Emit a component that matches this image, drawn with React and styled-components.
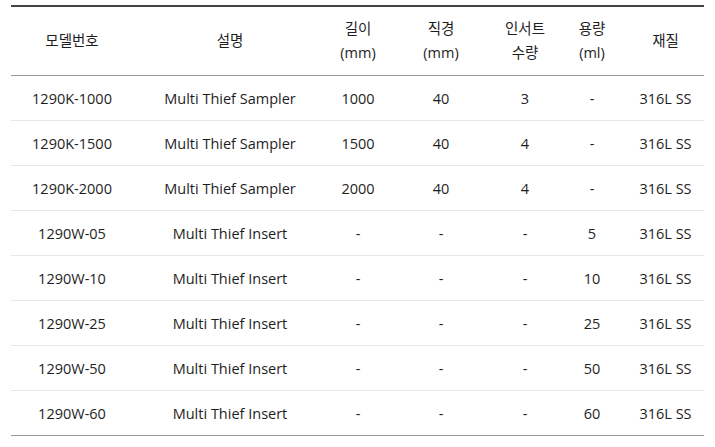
import React from 'react'
import styled, { createGlobalStyle } from 'styled-components';

const GlobalStyle = createGlobalStyle`
  body {
    margin: 0;
    background: #fff;
    font-family: "Open Sans", "Noto Sans CJK KR", sans-serif;
  }
`

const columns = [
  { label: ['모델번호'], width: 122 },
  { label: ['설명'], width: 194 },
  { label: ['길이', '(mm)'], width: 62 },
  { label: ['직경', '(mm)'], width: 104 },
  { label: ['인서트', '수량'], width: 64 },
  { label: ['용량', '(ml)'], width: 70 },
  { label: ['재질'], width: 77 },
];

const rows = [
  ['1290K-1000', 'Multi Thief Sampler', '1000', '40', '3', '-', '316L SS'],
  ['1290K-1500', 'Multi Thief Sampler', '1500', '40', '4', '-', '316L SS'],
  ['1290K-2000', 'Multi Thief Sampler', '2000', '40', '4', '-', '316L SS'],
  ['1290W-05', 'Multi Thief Insert', '-', '-', '-', '5', '316L SS'],
  ['1290W-10', 'Multi Thief Insert', '-', '-', '-', '10', '316L SS'],
  ['1290W-25', 'Multi Thief Insert', '-', '-', '-', '25', '316L SS'],
  ['1290W-50', 'Multi Thief Insert', '-', '-', '-', '50', '316L SS'],
  ['1290W-60', 'Multi Thief Insert', '-', '-', '-', '60', '316L SS'],
];

const App = () => {
  return (
    <>
      <GlobalStyle />
      <SpecWrapper>
        <SpecTable>
          <colgroup>
            {columns.map((c, i) => <col key={i} style={{ width: c.width }} />)}
          </colgroup>
          <thead>
            <tr>
              {columns.map((c, i) => (
                <HeadCell key={i}>
                  {c.label.map((line, j) => <HeadLine key={j}>{line}</HeadLine>)}
                </HeadCell>
              ))}
            </tr>
          </thead>
          <tbody>
            {rows.map((r, i) => (
              <BodyRow key={i} $last={i === rows.length - 1}>
                {r.map((v, j) => <BodyCell key={j}>{v}</BodyCell>)}
              </BodyRow>
            ))}
          </tbody>
        </SpecTable>
      </SpecWrapper>
    </>
  )
}

export default App

const SpecWrapper = styled.div`
  padding: 5px 11px;
`

const SpecTable = styled.table`
  width: 693px;
  table-layout: fixed;
  border-collapse: separate;
  border-spacing: 0;
  border-top: 2px solid #444;
  color: #1e1e1e;
  font-size: 14.5px;
`

const HeadCell = styled.th`
  height: 68px;
  padding: 0;
  font-weight: 400;
  text-align: center;
  vertical-align: middle;
  border-bottom: 1px solid #9a9a9a;
  line-height: 24px;
`

const HeadLine = styled.div`
  white-space: nowrap;
`

const BodyRow = styled.tr`
  > td {
    border-bottom: 1px solid ${p => (p.$last ? '#9a9a9a' : '#e8e8e8')};
  }
`

const BodyCell = styled.td`
  height: 44px;
  padding: 0;
  text-align: center;
  vertical-align: middle;
  white-space: nowrap;
`
